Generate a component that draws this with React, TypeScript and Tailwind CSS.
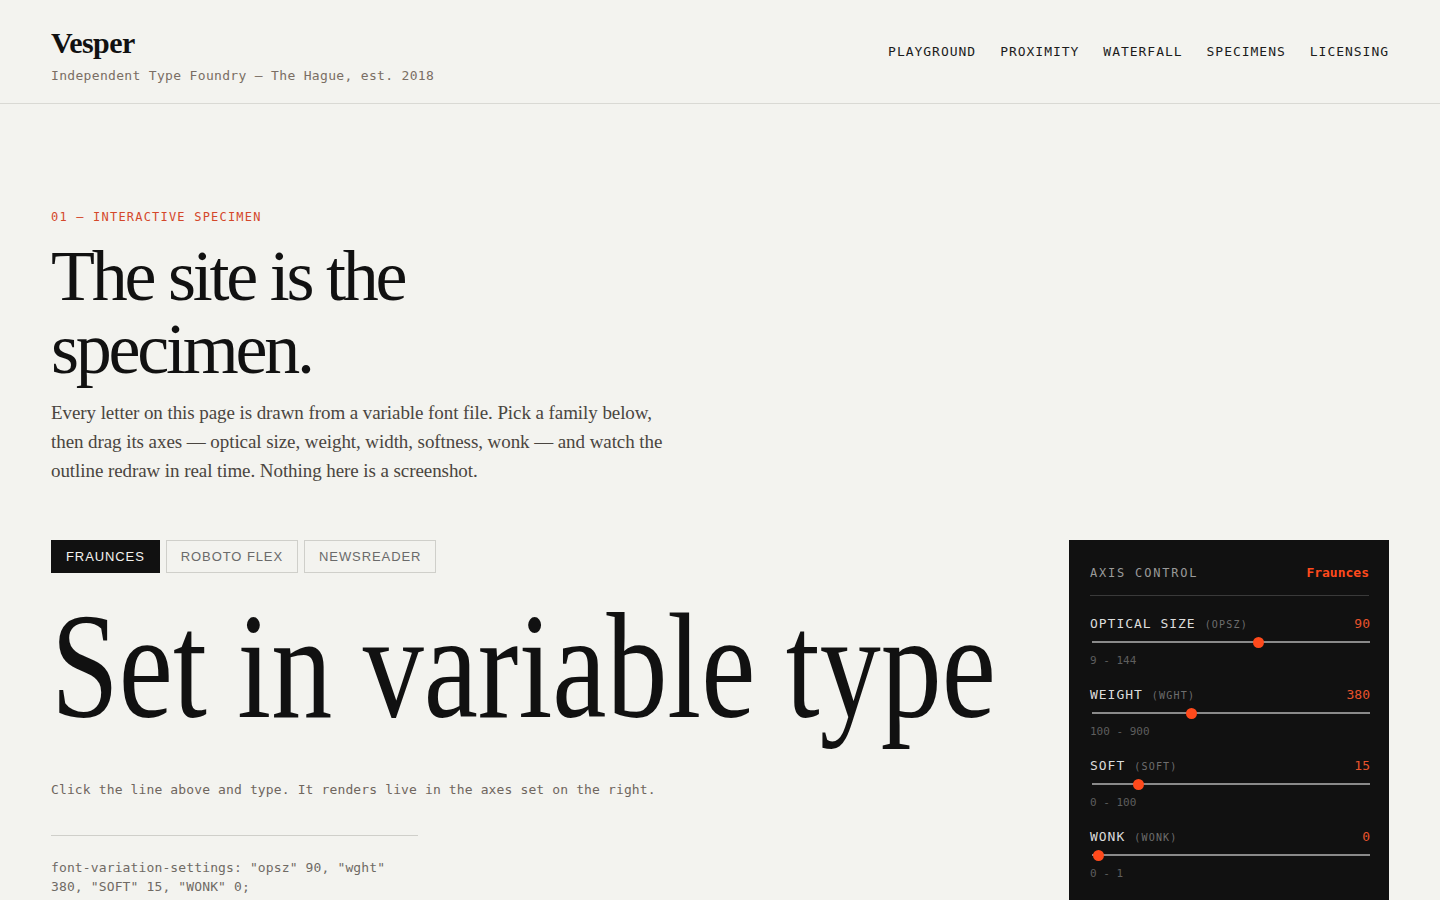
import React from "react";

const mono = "font-['DejaVu_Sans_Mono',monospace]";
const serif = "font-['Liberation_Serif',serif]";
const sans = "font-['Liberation_Sans',Arial,sans-serif]";

type Axis = { name: string; tag: string; value: number; min: number; max: number };

const axes: Axis[] = [
  { name: "OPTICAL SIZE", tag: "(OPSZ)", value: 90, min: 9, max: 144 },
  { name: "WEIGHT", tag: "(WGHT)", value: 380, min: 100, max: 900 },
  { name: "SOFT", tag: "(SOFT)", value: 15, min: 0, max: 100 },
  { name: "WONK", tag: "(WONK)", value: 0, min: 0, max: 1 },
];

function AxisRow({ a }: { a: Axis }) {
  const p = (a.value - a.min) / (a.max - a.min);
  return (
    <div className="mb-[16.5px]">
      <div className="flex items-baseline justify-between h-[20px] leading-[20px]">
        <div className="flex items-baseline">
          <span className={`${mono} text-[13px] tracking-[0.075em] text-[#dcdcdc]`}>{a.name}</span>
          <span className={`${mono} text-[10px] tracking-[0.12em] text-[#6e6e6e] ml-[9px]`}>{a.tag}</span>
        </div>
        <span className={`${mono} text-[13px] text-[#e8532c]`}>{a.value}</span>
      </div>
      <div className="relative mt-[2px] h-[12px] ml-[2px]">
        <div className="absolute left-0 right-0 top-[5px] h-[2px] bg-[#8a8a8a]" />
        <div
          className="absolute top-[0.5px] w-[11px] h-[11px] rounded-full bg-[#ff4a1c]"
          style={{ left: `calc(${p} * (100% - 11px) + 0.5px)` }}
        />
      </div>
      <div className={`${mono} text-[11px] leading-[16px] text-[#5e5e5e] mt-[4.5px]`}>
        {a.min} - {a.max}
      </div>
    </div>
  );
}

export default function App() {
  return (
    <div className="min-h-screen bg-[#f3f3ef] text-[#111]">
      <header className="h-[104px] border-b border-[#d9d9d4] px-[51px] flex justify-between items-start">
        <div className="pt-[27px]">
          <div className={`${serif} font-bold text-[30px] leading-[32px] tracking-[-0.02em] text-[#111]`}>
            Vesper
          </div>
          <div className={`${mono} text-[13px] leading-[20px] tracking-[0.025em] text-[#7a6e64] mt-[7px]`}>
            Independent Type Foundry — The Hague, est. 2018
          </div>
        </div>
        <nav className={`${mono} flex gap-[24px] pt-[42px] text-[13px] leading-[20px] tracking-[0.075em] text-[#1c1c1c]`}>
          <a>PLAYGROUND</a>
          <a>PROXIMITY</a>
          <a>WATERFALL</a>
          <a>SPECIMENS</a>
          <a>LICENSING</a>
        </nav>
      </header>

      <main className="px-[51px] pt-[105px]">
        <div className={`${mono} text-[12px] leading-[16px] tracking-[0.1em] text-[#d4472a]`}>
          01 — INTERACTIVE SPECIMEN
        </div>
        <h1 className={`${serif} mt-[15px] text-[72px] leading-[72.6px] tracking-[-0.045em] text-[#111] font-normal`}>
          The site is the
          <br />
          specimen.
        </h1>
        <p className={`${serif} mt-[13px] text-[19px] leading-[29px] tracking-[-0.004em] text-[#4a4540] whitespace-nowrap`}>
          Every letter on this page is drawn from a variable font file. Pick a family below,
          <br />
          then drag its axes — optical size, weight, width, softness, wonk — and watch the
          <br />
          outline redraw in real time. Nothing here is a screenshot.
        </p>

        <div className="mt-[54.6px] flex justify-between gap-[60px]">
          <div className="flex-1 min-w-0">
            <div className={`${sans} flex gap-[6px] text-[13px] tracking-[0.07em]`}>
              <button className="h-[33px] px-[14px] border border-[#111] bg-[#111] text-[#f3f3ef]">FRAUNCES</button>
              <button className="h-[33px] px-[14px] border border-[#cfcfca] text-[#6a6a6a]">ROBOTO FLEX</button>
              <button className="h-[33px] px-[14px] border border-[#cfcfca] text-[#6a6a6a]">NEWSREADER</button>
            </div>
            <div className={`${serif} mt-[13px] whitespace-nowrap text-[150px] leading-[160px] text-[#111]`}>
              <span className="inline-block origin-left scale-x-[0.813]">Set in variable type</span>
            </div>
            <div className={`${mono} mt-[34.5px] text-[13px] leading-[20px] tracking-[0.01em] text-[#6f665e]`}>
              Click the line above and type. It renders live in the axes set on the right.
            </div>
            <div className="mt-[35px] w-[367px] h-px bg-[#cfcfca]" />
            <div className={`${mono} mt-[22.2px] w-[367px] text-[13px] leading-[19px] tracking-[0.01em] text-[#6f6a64]`}>
              font-variation-settings: "opsz" 90, "wght" 380, "SOFT" 15, "WONK" 0;
            </div>
          </div>

          <aside className="w-[320px] shrink-0 bg-[#111] pl-[21px] pr-[19px] pt-[23.5px] pb-[24px]">
            <div className="flex items-baseline justify-between pb-[12.5px] border-b border-[#3a3a3a] h-[33px] mr-[1px]">
              <span className={`${mono} text-[12px] leading-[20px] tracking-[0.15em] text-[#9a9a9a]`}>AXIS CONTROL</span>
              <span className={`${mono} text-[13px] leading-[20px] font-bold text-[#ff4a1c]`}>Fraunces</span>
            </div>
            <div className="pt-[18px]">
              {axes.map((a) => (
                <AxisRow key={a.tag} a={a} />
              ))}
            </div>
          </aside>
        </div>
      </main>
    </div>
  );
}
